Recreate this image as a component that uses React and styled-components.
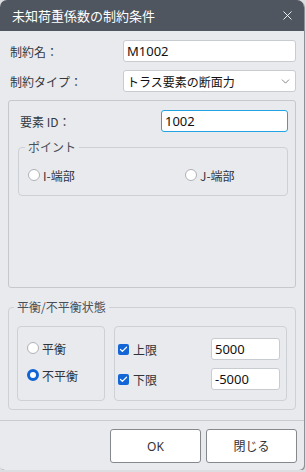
import React from "react";
import styled, { createGlobalStyle } from "styled-components";
import { X, ChevronDown, Check } from "lucide-react";

const GlobalStyle = createGlobalStyle`
  html, body {
    margin: 0;
    padding: 0;
    background: #dcdde0;
  }
  body {
    font-family: "Noto Sans", "Noto Sans CJK JP", sans-serif;
    font-size: 12px;
    color: #343941;
  }
  * {
    box-sizing: border-box;
  }
`;

const Dialog = styled.div`
  width: 304px;
  height: 470px;
  background: #e9eaee;
  border-radius: 7px 7px 5px 5px;
  overflow: hidden;
  display: flex;
  flex-direction: column;
  box-shadow: 1px 1px 0 #8d9096;
`;

const TitleBar = styled.div`
  height: 31px;
  flex: none;
  background: #50565f;
  color: #fff;
  display: flex;
  align-items: center;
  justify-content: space-between;
  padding: 0 9px 0 12px;
  font-size: 13px;
  font-family: "Noto Sans CJK JP", sans-serif;
`;

const Body = styled.div`
  flex: 1;
  padding: 9px 8px 0 8px;
  display: flex;
  flex-direction: column;
`;

const Row = styled.div`
  display: grid;
  grid-template-columns: ${(p) => p.cols || "115px 1fr"};
  align-items: center;
  height: 22px;
  margin-top: ${(p) => p.gap || 0}px;
`;

const Label = styled.span`
  padding-left: 2px;
  font-family: "Noto Sans CJK JP", sans-serif;
`;

const Field = styled.div`
  height: 22px;
  background: #fff;
  border: 1px solid ${(p) => (p.focused ? "#22a3e4" : "#c8cbd0")};
  border-radius: 3px;
  padding: 0 3px;
  display: flex;
  align-items: center;
  justify-content: space-between;
  font-size: ${(p) => p.size || 13}px;
  color: #111;
  font-family: "Noto Sans", "Noto Sans CJK JP", sans-serif;
`;

const Group = styled.div`
  margin-top: 8px;
  height: 188px;
  border: 1px solid #c6c8cd;
  border-radius: 3px;
  padding: 9px 7px 0 9px;
`;

const Fieldset = styled.fieldset`
  margin: ${(p) => p.mt}px 0 0 0;
  height: ${(p) => p.h}px;
  border: 1px solid #cdd0d4;
  border-radius: 4px;
  padding: ${(p) => p.pad};
  min-width: 0;
`;

const Legend = styled.legend`
  padding: 0 3px;
  margin-left: -3px;
  line-height: 16px;
  color: #4a4f57;
  font-family: "Noto Sans CJK JP", sans-serif;
`;

const PointRow = styled.div`
  display: grid;
  grid-template-columns: 157px 1fr;
  align-items: center;
  height: 22px;
  margin-top: 9px;
`;

const Option = styled.label`
  display: flex;
  align-items: center;
  gap: 3px;
  height: 22px;
  color: #30343a;
  font-family: "Noto Sans CJK JP", sans-serif;
`;

const Radio = styled.span`
  width: 12px;
  height: 12px;
  border-radius: 50%;
  background: #fff;
  border: ${(p) => (p.checked ? "3.5px solid #1064d4" : "1px solid #aeb1b6")};
  flex: none;
`;

const Box = styled.span`
  width: 11px;
  height: 11px;
  border-radius: 2px;
  background: #1466d6;
  color: #fff;
  display: flex;
  align-items: center;
  justify-content: center;
  flex: none;
  margin-right: 1px;
`;

const StateGrid = styled.div`
  display: grid;
  grid-template-columns: 88px 1fr;
  gap: 9px;
  margin-top: 11px;
`;

const Panel = styled.div`
  height: 75px;
  border: 1px solid #cdd0d4;
  border-radius: 4px;
  padding: ${(p) => p.pad};
  display: flex;
  flex-direction: column;
  gap: ${(p) => p.gap}px;
`;

const LimitRow = styled.div`
  display: grid;
  grid-template-columns: 1fr 69px;
  align-items: center;
  height: 22px;
`;

const Footer = styled.div`
  margin-top: 10px;
  border-top: 1px solid #c9cbd0;
  display: flex;
  justify-content: flex-end;
  gap: 5px;
  padding: 8px 7px 0 0;
  flex: 1;
`;

const Button = styled.button`
  width: 91px;
  height: 34px;
  background: #fff;
  border: 1px solid #85888d;
  border-radius: 3px;
  font-size: 12px;
  color: #333;
  font-family: "Noto Sans", "Noto Sans CJK JP", sans-serif;
`;

export default function App() {
  return (
    <>
      <GlobalStyle />
      <Dialog>
        <TitleBar>
          <span>未知荷重係数の制約条件</span>
          <X size={15} strokeWidth={1.4} color="#fff" />
        </TitleBar>
        <Body>
          <Row>
            <Label>制約名：</Label>
            <Field>M1002</Field>
          </Row>
          <Row gap={8}>
            <Label>制約タイプ：</Label>
            <Field size={12}>
              <span style={{ fontFamily: "Noto Sans CJK JP" }}>トラス要素の断面力</span>
              <ChevronDown size={13} strokeWidth={1.3} color="#555" />
            </Field>
          </Row>

          <Group>
            <Row cols="1fr 127px">
              <Label>要素 ID：</Label>
              <Field focused>1002</Field>
            </Row>
            <Fieldset mt={7} h={57} pad="0 9px">
              <Legend>ポイント</Legend>
              <PointRow>
                <Option>
                  <Radio />
                  I-端部
                </Option>
                <Option>
                  <Radio />
                  J-端部
                </Option>
              </PointRow>
            </Fieldset>
          </Group>

          <Fieldset mt={11} h={111} pad="0 8px">
            <Legend>平衡/不平衡状態</Legend>
            <StateGrid>
              <Panel pad="10px 9px 0" gap={5}>
                <Option>
                  <Radio />
                  平衡
                </Option>
                <Option>
                  <Radio checked />
                  不平衡
                </Option>
              </Panel>
              <Panel pad="11px 6px 0 3px" gap={8}>
                <LimitRow>
                  <Option>
                    <Box>
                      <Check size={9} strokeWidth={3.2} />
                    </Box>
                    上限
                  </Option>
                  <Field>5000</Field>
                </LimitRow>
                <LimitRow>
                  <Option>
                    <Box>
                      <Check size={9} strokeWidth={3.2} />
                    </Box>
                    下限
                  </Option>
                  <Field>-5000</Field>
                </LimitRow>
              </Panel>
            </StateGrid>
          </Fieldset>
        </Body>
        <Footer>
          <Button>OK</Button>
          <Button>閉じる</Button>
        </Footer>
      </Dialog>
    </>
  );
}
